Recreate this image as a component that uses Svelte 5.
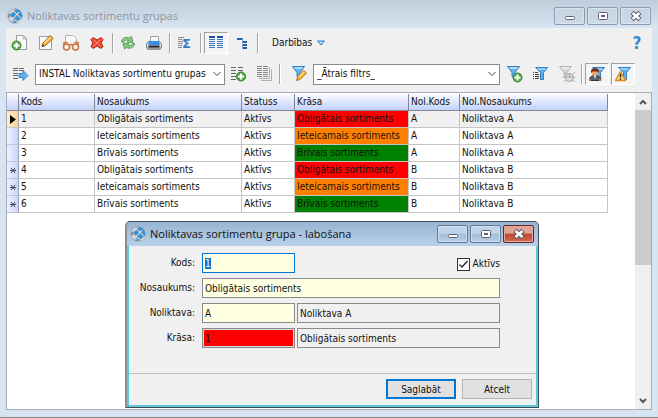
<script lang="ts">
  import { onMount } from 'svelte';

  type Row = { code: number; name: string; color: string; whCode: string; marked: boolean };

  const columns = [
    { label: 'Kods', width: 76 },
    { label: 'Nosaukums', width: 147 },
    { label: 'Statuss', width: 53 },
    { label: 'Krāsa', width: 114 },
    { label: 'Nol.Kods', width: 51 },
    { label: 'Nol.Nosaukums', width: 148 },
  ];

  const rows: Row[] = [
    { code: 1, name: 'Obligātais sortiments', color: 'red', whCode: 'A', marked: false },
    { code: 2, name: 'Ieteicamais sortiments', color: 'orange', whCode: 'A', marked: false },
    { code: 3, name: 'Brīvais sortiments', color: 'green', whCode: 'A', marked: false },
    { code: 4, name: 'Obligātais sortiments', color: 'red', whCode: 'B', marked: true },
    { code: 5, name: 'Ieteicamais sortiments', color: 'orange', whCode: 'B', marked: true },
    { code: 6, name: 'Brīvais sortiments', color: 'green', whCode: 'B', marked: true },
  ];

  let selected = $state(1);
  let active = $state(true);
  let code = $state('1');
  let name = $state('Obligātais sortiments');
  let warehouse = $state('A');
  let color = $state('1');
  let codeInput: HTMLInputElement;

  onMount(() => {
    codeInput.focus();
    codeInput.select();
  });
</script>

{#snippet logo()}
  <svg class="logo" viewBox="0 0 16 16" aria-hidden="true">
    <circle cx="8" cy="8" r="7.5" fill="#8b9298" />
    <path d="M1 6 4 2l4-1-2 4zM1 10l3-1 3 5-4-1zM12 12l3-2-2 4-4 1z" fill="#d3d8dc" />
    <path d="M8 3l2.500-2 3 2.500-2.500 2zM12 6l1.500-2 2 3.500-1.500 2zM4 6l2.500-2 2.500 3-3 2.500zM9 9.500l2-2.500 3 3-2.500 2.500zM6 11.500l2-1.500 2 3-1.500 1.500z" fill="#1e96ee" />
    <path d="M7 3.500l7 7M3 8.500l7 5M5 11.500l7-7.500" stroke="#eaf3fa" stroke-width="1" />
  </svg>
{/snippet}

{#snippet windowButtons()}
  <div class="window-buttons">
    <button aria-label="Minimizēt">
      <svg viewBox="0 0 14 12"><rect x="2.5" y="6.5" width="9" height="3" rx="1" fill="#fff" stroke="#5c6270" /></svg>
    </button>
    <button aria-label="Maksimizēt">
      <svg viewBox="0 0 14 12">
        <rect x="2.5" y="2.5" width="9" height="7" rx="1" fill="#fff" stroke="#5c6270" />
        <rect x="5.5" y="5.5" width="3" height="1" fill="#a9bbd0" stroke="#5c6270" />
      </svg>
    </button>
    <button class="close" aria-label="Aizvērt">
      <svg viewBox="0 0 14 12">
        <path d="M3 2.500 11 9.500M11 2.500 3 9.500" stroke="#565c6b" stroke-width="4.500" />
        <path d="M3.500 3 10.500 9M10.500 3 3.500 9" stroke="#fff" stroke-width="2.500" />
      </svg>
    </button>
  </div>
{/snippet}

{#snippet funnel(light: string, dark: string)}
  <path d="M2.500 1.500h12l-4.500 6v5l-3-1V7.500z" fill={light} stroke={dark} />
  <path d="M4.500 3h8" stroke="#fff" stroke-width="1.500" opacity="0.7" />
{/snippet}

{#snippet sideFunnel()}
  <path d="M4.500 2.500h12l-4 5v7h-3v-7z" fill="#5caeed" stroke="#2f7fc2" />
  <path d="M6.500 4h8" stroke="#d5edff" />
{/snippet}

{#snippet plus(x: number, y: number)}
  <circle cx={x} cy={y} r="4.500" fill="#58a850" stroke="#317f2b" />
  <path d="M{x - 3} {y}h6M{x} {y - 3}v6" stroke="#fff" stroke-width="2" />
{/snippet}

<main class="window">
  <header class="title-bar">
    {@render logo()}
    <h1>Noliktavas sortimentu grupas</h1>
    {@render windowButtons()}
  </header>

  <section class="client">
    <div class="toolbar" role="toolbar" aria-label="Darbības ar ierakstiem">
      <button class="tool" aria-label="Jauns">
        <svg viewBox="0 0 18 18">
          <path d="M6.500 1.500h7l3 3v11h-10z" fill="#fafafa" stroke="#969ba3" />
          <path d="M13 1.500V5h3.500" fill="#ddd" stroke="#b2b6bc" />
          {@render plus(6.5, 11.5)}
        </svg>
      </button>
      <button class="tool" aria-label="Labot">
        <svg viewBox="0 0 18 18">
          <path d="M3.500 2.500h12v13h-12z" fill="#fafafa" stroke="#969ba3" />
          <path d="M6 12.500 7 9l7-7.500 3 3-7.500 7z" fill="#f6b52e" stroke="#a8651b" />
          <path d="M8.500 9 14.500 3" stroke="#ffe28a" stroke-width="1.500" />
          <path d="M5.500 13l1-3 2 2z" fill="#444" />
        </svg>
      </button>
      <button class="tool" aria-label="Skatīt">
        <svg viewBox="0 0 18 18">
          <path d="M3.500 7V1.500h8l3 3V8" fill="#fafafa" stroke="#adb0b5" />
          <path d="M2 12V8.500h3.500M16 12V8.500h-3.500M7 12c1-2 3-2 4 0" fill="none" stroke="#c9743c" stroke-width="1.500" />
          <circle cx="4.500" cy="13" r="3" fill="#f7f0e9" stroke="#c9743c" stroke-width="1.500" />
          <circle cx="13.500" cy="13" r="3" fill="#f7f0e9" stroke="#c9743c" stroke-width="1.500" />
        </svg>
      </button>
      <button class="tool" aria-label="Dzēst">
        <svg viewBox="0 0 18 18">
          <path d="M5 3.500 9 6l4-2.500 2 2-2 3.500 2 3.500-2 2L9 12l-4 2.500-2-2L5 9 3 5.500z" fill="#ee4a36" stroke="#b62112" />
          <path d="M5.500 5.500l7 7M12.500 5.500l-7 7" stroke="#ff8371" />
        </svg>
      </button>
      <span class="separator"></span>
      <button class="tool" aria-label="Atjaunot">
        <svg viewBox="0 0 18 18">
          <path d="M2.500 8c.5-4.500 4.500-5.500 8-4l2-1.500 1.500 6-6-.5 1.500-1.500C7.500 5.500 5.500 6 4.500 8z" fill="#8ccb83" stroke="#579f52" />
          <path d="M15.500 9.500c-.5 4.500-4.500 5.500-8 4l-2 1.500-1.500-6 6 .5-1.500 1.500c2 1 4 .5 5-1.500z" fill="#8ccb83" stroke="#579f52" />
        </svg>
      </button>
      <button class="tool" aria-label="Drukāt">
        <svg viewBox="0 0 18 18">
          <path d="M5.500 9V2.500h8V9" fill="#f6f7f8" stroke="#9a9ea5" />
          <path d="M1.500 9.500l2-2h11l2 2V14h-15z" fill="#d9dce0" stroke="#85898f" />
          <path d="M4 7h10l1 4H3z" fill="#3b8de0" />
          <path d="M3.500 12.500h11" stroke="#222" stroke-width="2" />
          <path d="M2.500 14.500h13v1h-13z" fill="#eee" stroke="#999" />
        </svg>
      </button>
      <span class="separator"></span>
      <button class="tool" aria-label="Summēt">
        <svg viewBox="0 0 18 18">
          <path d="M2 3.500h6M2 5.500h4M2 7.500h5M2 9.500h5M2 11.500h4M2 13.500h4" stroke="#888" />
          <text x="6" y="14" class="sigma">Σ</text>
        </svg>
      </button>
      <span class="separator"></span>
      <button class="tool pressed" aria-label="Saraksts" aria-pressed="true">
        <svg viewBox="0 0 18 18">
          <path d="M2 3h6M10 3h6" stroke="#1d4f9c" stroke-width="2" />
          <path d="M2 5.500h6M2 7.500h6M2 9.500h6M2 11.500h6M2 13.500h6M10 5.500h6M10 7.500h6M10 9.500h6M10 11.500h6M10 13.500h6" stroke="#3a77c4" />
        </svg>
      </button>
      <button class="tool" aria-label="Koks">
        <svg viewBox="0 0 18 18">
          <path d="M4 5h6M9 8h5M9 11h5M9 14h5" stroke="#215fae" stroke-width="2" />
          <path d="M9.500 5v10" stroke="#7ea6d6" />
        </svg>
      </button>
      <span class="separator"></span>
      <button class="actions">
        Darbības
        <svg viewBox="0 0 8 6"><path d="M.5 1h7L4 5z" fill="#b7e0fa" stroke="#2a80cf" /></svg>
      </button>
      <button class="tool help" aria-label="Palīdzība">?</button>
    </div>

    <div class="toolbar filters" role="toolbar" aria-label="Skati un filtri">
      <button class="tool" aria-label="Kolonnas">
        <svg viewBox="0 0 18 18">
          <path d="M2 3.500h5M8 3.500h5M2 5.500h5M8 5.500h5M2 8.500h5M2 10.500h5M2 13.500h5" stroke="#666" />
          <path d="M8 8.500h4V5.500l5 5-5 5v-3H8z" fill="#63b1ee" stroke="#3d86c8" />
        </svg>
      </button>
      <select class="view-select" aria-label="Skats">
        <option>INSTAL Noliktavas sortimentu grupas</option>
      </select>
      <button class="tool" aria-label="Pievienot skatu">
        <svg viewBox="0 0 18 18">
          <path d="M2 2.500h5M9 2.500h5M2 5.500h5M9 5.500h5M2 8.500h5M2 11.500h5M2 14.500h5" stroke="#666" />
          {@render plus(12, 11.5)}
        </svg>
      </button>
      <button class="tool" aria-label="Kopēt skatu">
        <svg viewBox="0 0 18 18">
          <path d="M2 1.500h5M8 1.500h5M2 3.500h5M8 3.500h5M2 5.500h5M8 5.500h5M2 7.500h5M8 7.500h5M2 9.500h5M8 9.500h5M2 11.500h5M8 11.500h5" stroke="#888" />
          <path d="M4 13.500h10.500V2M6 15.500h10.500V4" fill="none" stroke="#b0b0b0" />
        </svg>
      </button>
      <span class="separator wide"></span>
      <button class="tool" aria-label="Labot filtru">
        <svg viewBox="0 0 18 18">
          {@render funnel('#63b4f0', '#2f7fc2')}
          <path d="M6.500 15.500 7.500 12l6-6.500 3 2.500-6.500 6.500z" fill="#f6b52e" stroke="#b8702a" />
          <path d="M9 12l5-5" stroke="#ffe28a" stroke-width="1.500" />
        </svg>
      </button>
      <select class="filter-select" aria-label="Filtrs">
        <option>_Ātrais filtrs_</option>
      </select>
      <button class="tool" aria-label="Pievienot filtru">
        <svg viewBox="0 0 18 18">
          {@render funnel('#63b4f0', '#2f7fc2')}
          {@render plus(12.5, 12.5)}
        </svg>
      </button>
      <button class="tool" aria-label="Filtrēt sarakstu">
        <svg viewBox="0 0 18 18">
          <path d="M2 7.500h1M4 7.500h3M2 9.500h1M4 9.500h4M2 11.500h1M4 11.500h4M2 13.500h1M4 13.500h4" stroke="#444" />
          {@render sideFunnel()}
        </svg>
      </button>
      <button class="tool" aria-label="Noņemt filtru">
        <svg viewBox="0 0 18 18">
          {@render funnel('#d5d5d5', '#b3b3b3')}
          <path d="M7 7l2 2M6 12.500h3M7 17l2-2M18 7l-2 2M18 12.500h-2M18 17l-2-2" stroke="#aaa" />
          <circle cx="12.500" cy="12.500" r="4" fill="#ddd" stroke="#a5a5a5" />
          <path d="M8.500 12h8M12.500 9v3" stroke="#aaa" />
        </svg>
      </button>
      <span class="separator"></span>
      <button class="tool pressed" aria-label="Lietotāja filtrs" aria-pressed="true">
        <svg viewBox="0 0 18 18">
          {@render sideFunnel()}
          <path d="M1.500 15.500c0-3.500 2-5 5.500-5s6 1.500 6 5z" fill="#555d68" stroke="#30353c" />
          <circle cx="7" cy="7.500" r="3.500" fill="#e9a672" />
          <path d="M3 8V5.500C4 2 10 2 11 5.500V8L9.500 6.500h-5z" fill="#713315" />
          <path d="M6 11l1 3 1-3z" fill="#fff" />
          <path d="M1 14h2v2H1zM11 14h2v2h-2z" fill="#dd7430" />
        </svg>
      </button>
      <button class="tool pressed" aria-label="Brīdinājumu filtrs" aria-pressed="true">
        <svg viewBox="0 0 18 18">
          {@render sideFunnel()}
          <path d="M6.500 6.500 11.500 15.500h-10z" fill="#ffdf70" stroke="#e08a26" stroke-width="1.500" stroke-linejoin="round" />
          <path d="M6.500 9v3.500M6.500 13.500V15" stroke="#333" stroke-width="1.500" />
        </svg>
      </button>
    </div>

    <div class="grid">
      <div class="grid-view">
        <table>
          <colgroup>
            <col style="width: 12px" />
            {#each columns as col}
              <col style="width: {col.width}px" />
            {/each}
          </colgroup>
          <thead>
            <tr>
              <th aria-label="Ieraksts"></th>
              {#each columns as col}
                <th scope="col">{col.label}</th>
              {/each}
            </tr>
          </thead>
          <tbody>
            {#each rows as row}
              <tr class:selected={row.code === selected} onclick={() => (selected = row.code)}>
                <td class="indicator">
                  {#if row.code === selected}
                    <svg viewBox="0 0 6 9"><path d="M0 0l6 4.500L0 9z" /></svg>
                  {:else if row.marked}
                    <svg viewBox="0 0 6 9"><path d="M0 4.500h6M1 2l4 5M5 2 1 7" stroke="#445" /></svg>
                  {/if}
                </td>
                <td>{row.code}</td>
                <td>{row.name}</td>
                <td>Aktīvs</td>
                <td class={row.color}>{row.name}</td>
                <td>{row.whCode}</td>
                <td>Noliktava {row.whCode}</td>
              </tr>
            {/each}
          </tbody>
        </table>
      </div>
      <div class="scrollbar">
        <button aria-label="Uz augšu">
          <svg viewBox="0 0 8 6"><path d="M1 5l3-3 3 3" /></svg>
        </button>
        <div class="thumb"></div>
        <button aria-label="Uz leju">
          <svg viewBox="0 0 8 6"><path d="M1 1l3 3 3-3" /></svg>
        </button>
      </div>
    </div>
  </section>

  <dialog class="dialog" open aria-labelledby="dialog-title">
    <header class="title-bar">
      {@render logo()}
      <h2 id="dialog-title">Noliktavas sortimentu grupa - labošana</h2>
      {@render windowButtons()}
    </header>
    <form onsubmit={(e) => e.preventDefault()}>
      <div class="fields">
        <label for="code">Kods:</label>
        <input id="code" type="text" bind:this={codeInput} bind:value={code} />
        <label class="check">
          <input type="checkbox" bind:checked={active} />
          Aktīvs
        </label>

        <label for="name">Nosaukums:</label>
        <input id="name" class="span" type="text" bind:value={name} />

        <label for="warehouse">Noliktava:</label>
        <input id="warehouse" type="text" bind:value={warehouse} />
        <input type="text" value="Noliktava A" aria-label="Noliktavas nosaukums" readonly />

        <label for="color">Krāsa:</label>
        <input id="color" class="red" type="text" bind:value={color} />
        <input type="text" value="Obligātais sortiments" aria-label="Krāsas nosaukums" readonly />
      </div>
      <footer>
        <button class="default" type="submit">Saglabāt</button>
        <button type="button">Atcelt</button>
      </footer>
    </form>
  </dialog>
</main>

<style>
  :global(body) {
    margin: 0;
  }

  .window,
  .window * {
    box-sizing: border-box;
  }

  .window {
    position: relative;
    display: flex;
    flex-direction: column;
    min-height: 100vh;
    padding: 0 6px 7px;
    background: #d7e4f2;
    border-bottom: 1px solid #85868c;
    font-family: 'DejaVu Sans Condensed', Tahoma, 'Noto Sans', sans-serif;
    font-size: 10px;
    color: #111;
  }

  button,
  input,
  select {
    font: inherit;
    color: inherit;
  }

  button {
    padding: 0;
  }

  .title-bar {
    display: flex;
    align-items: center;
    height: 28px;
    margin: 0 -6px;
    padding: 4px 7px 0;
    background: linear-gradient(#bfccd9, #d7e4f2);
  }

  .logo {
    width: 16px;
    height: 16px;
    margin-right: 4px;
  }

  h1,
  h2 {
    flex: 1;
    margin: 0;
    font-family: 'Open Sans', 'Noto Sans', sans-serif;
    font-size: 11px;
    font-weight: 400;
    line-height: 16px;
    color: #8d949c;
  }

  .window-buttons {
    display: flex;
    gap: 2px;
  }

  .window-buttons button {
    display: flex;
    align-items: center;
    justify-content: center;
    width: 31px;
    height: 18px;
    border: 1px solid #8c9bb0;
    border-radius: 2px;
    background: linear-gradient(#c7d4e2, #ccd9e7);
    box-shadow: inset 0 0 0 1px #d9e4ef;
  }

  .window-buttons svg {
    width: 14px;
    height: 12px;
  }

  .client {
    flex: 1;
    display: flex;
    flex-direction: column;
    background: #f0f0f0;
  }

  .toolbar {
    display: flex;
    align-items: center;
    height: 29px;
    padding-right: 2px;
  }

  .toolbar.filters {
    height: 35px;
    padding: 0 16px 1px 1px;
  }

  .tool {
    flex: none;
    display: flex;
    align-items: center;
    justify-content: center;
    width: 26px;
    height: 22px;
    border: 0;
    background: none;
  }

  .tool svg {
    width: 18px;
    height: 18px;
  }

  .tool.pressed {
    width: 24px;
    margin: 0 1px;
    border: 1px solid;
    border-color: #a0a0a0 #fff #fff #a0a0a0;
    background: #f5f5f5;
  }

  .sigma {
    font: bold 13px 'DejaVu Sans', sans-serif;
    fill: #3a7bc8;
  }

  .separator {
    flex: none;
    width: 2px;
    height: 20px;
    margin: 0 1px 0 2px;
    border-left: 1px solid #a5a5a5;
    border-right: 1px solid #fff;
  }

  .separator.wide {
    margin-right: 5px;
  }

  .actions {
    display: flex;
    align-items: center;
    gap: 5px;
    margin-left: 12px;
    border: 0;
    background: none;
  }

  .actions svg {
    width: 8px;
    height: 6px;
  }

  .help {
    margin-left: auto;
    font-size: 17px;
    font-weight: 700;
    color: #3989d0;
  }

  select {
    appearance: none;
    height: 21px;
    min-width: 0;
    padding: 0 18px 0 3px;
    border: 1px solid #8a8a8a;
    border-radius: 0;
    background: #fff
      url("data:image/svg+xml,%3Csvg xmlns='http://www.w3.org/2000/svg' width='8' height='6'%3E%3Cpath d='M.5 1 4 4.500 7.500 1' fill='none' stroke='%23444'/%3E%3C/svg%3E")
      no-repeat right 3px center;
    line-height: 18px;
  }

  .view-select {
    width: 190px;
    margin-left: 2px;
  }

  .filter-select {
    flex: 1;
    margin: 0 1px;
  }

  .grid {
    flex: 1;
    display: flex;
    border: 1px solid #a7adb6;
    background: #fff;
  }

  .grid-view {
    flex: 1;
    padding-top: 1px;
    overflow: hidden;
  }

  table {
    table-layout: fixed;
    width: 601px;
    border-collapse: separate;
    border-spacing: 0;
  }

  th,
  td {
    height: 17px;
    padding: 0 2px;
    border-right: 1px solid #c5c5c5;
    border-bottom: 1px solid #c5c5c5;
    font-weight: 400;
    line-height: 16px;
    text-align: left;
    white-space: nowrap;
  }

  th {
    border-color: #83868e;
    background: linear-gradient(#fafbff, #c3d2fb);
  }

  .indicator {
    padding: 0 0 0 3px;
    border-right-color: #9ba4b8;
    background: linear-gradient(90deg, #eef2ff, #c7d5fa);
  }

  .indicator svg {
    display: block;
    width: 6px;
    height: 9px;
  }

  .selected td {
    background: #f0f0f0;
  }

  .selected .indicator {
    background: linear-gradient(90deg, #ffedcc, #fbd394);
  }

  td.red,
  .selected td.red {
    background: #f00;
  }

  td.orange,
  .selected td.orange {
    background: #ff8000;
  }

  td.green,
  .selected td.green {
    background: #008000;
  }

  .scrollbar {
    display: flex;
    flex-direction: column;
    width: 16px;
    background: #f0f0f0;
  }

  .scrollbar button {
    height: 17px;
    border: 0;
    background: none;
  }

  .scrollbar button:last-child {
    margin-top: auto;
  }

  .scrollbar svg {
    width: 8px;
    height: 6px;
    fill: none;
    stroke: #555;
    stroke-width: 2;
  }

  .thumb {
    height: 155px;
    background: #cdcdcd;
  }

  .dialog {
    position: absolute;
    top: 221px;
    right: 119px;
    left: 125px;
    width: auto;
    margin: 0;
    padding: 0 2px 2px;
    border: 1px solid #3e4a56;
    border-left: 2px solid #8a8f94;
    border-radius: 5px 5px 0 0;
    outline: none;
    background: #5bc8dc;
    color: #111;
  }

  .dialog .title-bar {
    height: 24px;
    margin: 0 -2px;
    padding: 0 4px 0 3px;
    border-radius: 4px 4px 0 0;
    background: linear-gradient(#98b4d2, #b9d1ea);
  }

  .dialog h2 {
    color: #111;
  }

  .dialog .window-buttons button {
    border-color: #5f7896;
    background: linear-gradient(#c1d3e8 45%, #a4bcd7 50%, #b7cee6);
    box-shadow: inset 0 0 0 1px #cfdfef;
  }

  .dialog .window-buttons .close {
    border-color: #5e2626;
    background: linear-gradient(#e0a294 45%, #bf4632 50%, #d26d50);
    box-shadow: inset 0 0 0 1px #e6ab9c;
  }

  form {
    background: #f0f0f0;
  }

  .fields {
    display: grid;
    grid-template-columns: 70px 93px 1fr;
    grid-auto-rows: 20px;
    gap: 5px 2px;
    padding: 7px 36px 25px 1px;
  }

  .fields > label {
    padding: 3px 5px 0 0;
    line-height: 14px;
    text-align: right;
  }

  .fields > .check {
    display: flex;
    align-items: center;
    justify-content: flex-end;
    gap: 3px;
    padding: 2px 0 0;
  }

  input[type='text'] {
    width: 100%;
    min-width: 0;
    height: 20px;
    padding: 0 2px;
    border: 1px solid #8a8a8a;
    border-radius: 0;
    outline: none;
    background: #ffffe1;
  }

  input[type='text']:focus {
    border-color: #0078d7;
  }

  input::selection {
    background: #0078d7;
    color: #fff;
  }

  input[type='text'][readonly] {
    background: #f0f0f0;
  }

  input[type='text'].red {
    background: #f00;
    box-shadow: inset 0 0 0 1px #d8d8d8;
  }

  .span {
    grid-column: 2 / -1;
  }

  .check input {
    appearance: none;
    width: 13px;
    height: 13px;
    margin: 0;
    border: 1px solid #333;
    background: #fff;
  }

  .check input:checked {
    background: #fff
      url("data:image/svg+xml,%3Csvg xmlns='http://www.w3.org/2000/svg' width='11' height='11'%3E%3Cpath d='M1.500 5.500 4 8l5.500-6' fill='none' stroke='%23222' stroke-width='1.300'/%3E%3C/svg%3E")
      no-repeat center;
  }

  footer {
    display: flex;
    justify-content: flex-end;
    gap: 6px;
    padding: 5px 4px 6px 0;
    border-top: 1px solid #c0c0c0;
  }

  footer button {
    width: 70px;
    height: 20px;
    border: 1px solid #b5b5b5;
    background: #e1e1e1;
  }

  footer .default {
    border: 2px solid #0078d7;
  }
</style>
